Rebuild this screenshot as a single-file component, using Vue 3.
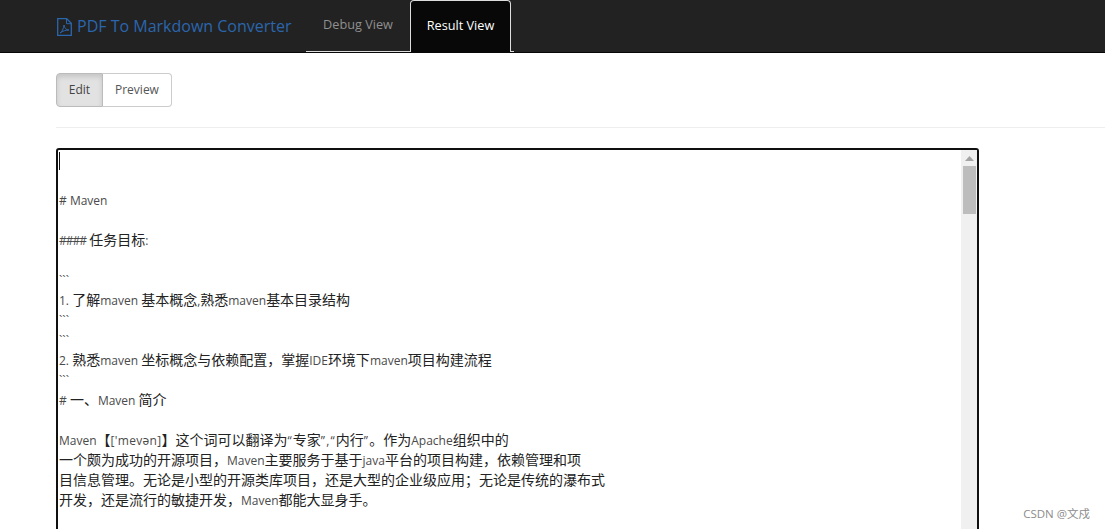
<script setup>
const source = [
  '', '', '# Maven', '', '#### \u4efb\u52a1\u76ee\u6807:', '', '```',
  '1. \u4e86\u89e3maven \u57fa\u672c\u6982\u5ff5,\u719f\u6089maven\u57fa\u672c\u76ee\u5f55\u7ed3\u6784', '```', '```',
  '2. \u719f\u6089maven \u5750\u6807\u6982\u5ff5\u4e0e\u4f9d\u8d56\u914d\u7f6e\uff0c\u638c\u63e1IDE\u73af\u5883\u4e0bmaven\u9879\u76ee\u6784\u5efa\u6d41\u7a0b', '```',
  '# \u4e00\u3001Maven \u7b80\u4ecb', '',
  'Maven\u3010[\'mev\u0259n]\u3011\u8fd9\u4e2a\u8bcd\u53ef\u4ee5\u7ffb\u8bd1\u4e3a\u201c\u4e13\u5bb6\u201d,\u201c\u5185\u884c\u201d\u3002\u4f5c\u4e3aApache\u7ec4\u7ec7\u4e2d\u7684',
  '\u4e00\u4e2a\u9887\u4e3a\u6210\u529f\u7684\u5f00\u6e90\u9879\u76ee\uff0cMaven\u4e3b\u8981\u670d\u52a1\u4e8e\u57fa\u4e8ejava\u5e73\u53f0\u7684\u9879\u76ee\u6784\u5efa\uff0c\u4f9d\u8d56\u7ba1\u7406\u548c\u9879',
  '\u76ee\u4fe1\u606f\u7ba1\u7406\u3002\u65e0\u8bba\u662f\u5c0f\u578b\u7684\u5f00\u6e90\u7c7b\u5e93\u9879\u76ee\uff0c\u8fd8\u662f\u5927\u578b\u7684\u4f01\u4e1a\u7ea7\u5e94\u7528\uff1b\u65e0\u8bba\u662f\u4f20\u7edf\u7684\u7011\u5e03\u5f0f',
  '\u5f00\u53d1\uff0c\u8fd8\u662f\u6d41\u884c\u7684\u654f\u6377\u5f00\u53d1\uff0cMaven\u90fd\u80fd\u5927\u663e\u8eab\u624b\u3002',
  '', '', ''
]
const cjkRange = '\\u3000-\\u303f\\u4e00-\\u9fff\\uff00-\\uffef'
const splitter = new RegExp(`#{2,}|\\[[^\\]]*\\]|[\\u201c\\u201d,]+(?=[\\u4e00-\\u9fff\\u201c])|[${cjkRange}]+|[^${cjkRange}#\\[\\u201c\\u201d,]+|.`, 'g')
const isCjk = new RegExp(`[${cjkRange}]`)
const kindOf = (part) => {
  if (part.startsWith('##')) return 'latin hashes'
  if (part.startsWith('[')) return 'latin phonetic'
  if (/^[\u201c\u201d]/.test(part)) return 'latin quotes'
  return isCjk.test(part) ? 'cjk' : 'latin'
}
const lines = source.map((text) =>
  (text.match(splitter) || []).map((part) => ({ part, kind: kindOf(part) }))
)
</script>

<template>
  <div class="page">
    <nav class="navbar">
      <a class="brand">
        <svg class="pdf" viewBox="0 0 15 18" width="15" height="18" fill="none" stroke="currentColor" stroke-width="1.300">
          <path d="M.700.700h9l4.600 4.600v12H.700z" />
          <path d="M9.500.700v5h4.800" stroke-width="1" />
          <path d="M3 15c2-1 3.700-4.500 4-8 .5 3.200 2 5 5 5-3.200 0-6 .9-9 3z" stroke-width="1" />
        </svg>
        <span>PDF To Markdown Converter</span>
      </a>
      <ul class="tabs">
        <li class="tab">Debug View</li>
        <li class="tab active">Result View</li>
        <li class="tab-rest"></li>
      </ul>
    </nav>
    <main class="content">
      <div class="btn-group">
        <button class="btn on">Edit</button>
        <button class="btn">Preview</button>
      </div>
      <hr class="rule" />
      <div class="editor">
        <span class="caret"></span>
        <div class="text">
          <div v-for="(line, i) in lines" :key="i" class="line">
            <span v-for="(seg, j) in line" :key="j" :class="seg.kind">{{ seg.part }}</span>
          </div>
        </div>
        <div class="scrollbar">
          <svg class="arrow" viewBox="0 0 9 5" width="9" height="5"><path d="M4.500 0L9 5H0z" fill="#a3a3a3" /></svg>
          <div class="thumb"></div>
        </div>
      </div>
    </main>
    <div class="watermark">CSDN @文戍</div>
  </div>
</template>

<style>
html, body { margin: 0; overflow: hidden; background: #fff; }
</style>

<style scoped>
.page {
  position: relative;
  height: 529px;
  overflow: hidden;
  font-family: "Open Sans", "Noto Sans CJK SC", sans-serif;
  font-size: 12px;
  color: #333;
}
.navbar {
  display: flex;
  height: 52px;
  padding-left: 57px;
  background: #222;
  border-bottom: 1px solid #080808;
}
.brand {
  display: flex;
  align-items: center;
  gap: 5px;
  width: 249px;
  color: #2a66ad;
  font-size: 16px;
}
.pdf { flex: none; margin-top: 2px; }
.tabs { display: flex; margin: 0; padding: 0; list-style: none; }
.tab {
  box-sizing: border-box;
  height: 52px;
  width: 104px;
  padding: 0 0 3px;
  display: flex;
  align-items: center;
  justify-content: center;
  font-size: 12.700px;
  color: #8f8f8f;
  border-bottom: 1px solid #ddd;
}
.tab.active {
  width: 101px;
  padding: 0 0 3px;
  color: #fff;
  background: #080808;
  border: 1px solid #ddd;
  border-bottom: none;
  border-radius: 4px 4px 0 0;
}
.tab-rest { width: 3px; height: 52px; box-sizing: border-box; border-bottom: 1px solid #ddd; }
.content { padding: 20px 0 0 56px; }
.btn-group { display: flex; }
.btn {
  box-sizing: border-box;
  height: 34px;
  padding: 0 12px 2px;
  font: inherit;
  color: #555;
  background: #fff;
  border: 1px solid #ccc;
  border-left: none;
  border-radius: 0 4px 4px 0;
}
.btn.on {
  width: 47px;
  padding: 0 0 2px;
  color: #444;
  background: #e2e2e2;
  border: 1px solid #bbb;
  border-radius: 4px 0 0 4px;
  box-shadow: inset 0 3px 5px rgba(0, 0, 0, .125);
}
.rule { height: 1px; margin: 20px 0; border: 0; background: #eee; }
.editor {
  position: relative;
  box-sizing: border-box;
  display: flex;
  width: 923px;
  height: 480px;
  border: 2px solid #101010;
  border-radius: 3px;
}
.caret { position: absolute; left: 1px; top: 2px; width: 1px; height: 18px; background: #111; }
.text { flex: 1; padding: 1px 0 0 1px; height: 476px; box-sizing: border-box; line-height: 20px; }
.line { height: 20px; white-space: pre; }
.latin { font-size: 12px; line-height: 0; color: #4a4a4a; }
.cjk { font-size: 14px; line-height: 0; color: #222; }
.hashes { letter-spacing: -1px; }
.phonetic { letter-spacing: .3px; }
.quotes { letter-spacing: 1.200px; }
.scrollbar {
  width: 16px;
  padding-top: 6px;
  box-sizing: border-box;
  background: #f0f0f0;
  display: flex;
  flex-direction: column;
  align-items: center;
}
.arrow { flex: none; }
.thumb { width: 13px; height: 48px; margin-top: 5px; background: #bdbdbd; }
.watermark {
  position: absolute;
  right: 15px;
  top: 506px;
  font-size: 11.500px;
  line-height: 16px;
  color: #8c8c8c;
  padding: 0 0 0 2px;
}
</style>
